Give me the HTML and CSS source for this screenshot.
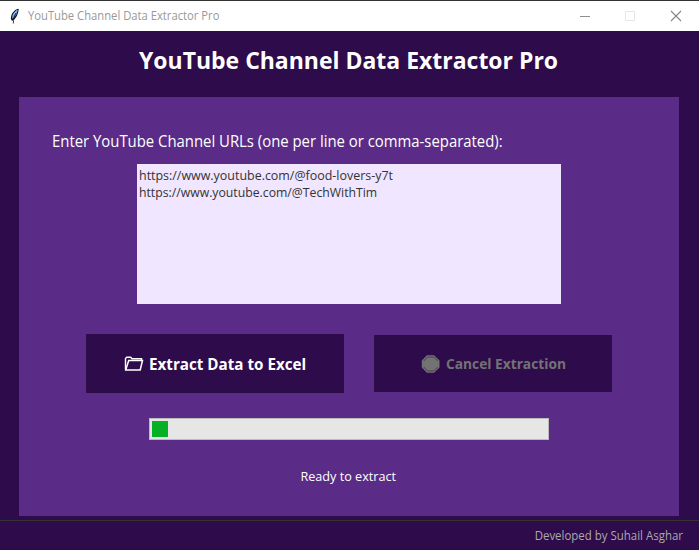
FILE: index.html
```html
<!DOCTYPE html>
<html lang="en">
<head>
<meta charset="utf-8">
<title>YouTube Channel Data Extractor Pro</title>
<link rel="stylesheet" href="styles.css">
</head>
<body>
<div class="window">
  <header class="titlebar">
    <svg class="feather" width="12" height="16" viewBox="0 0 12 16">
      <path d="M9.700.7C6.500 1 3.500 4 2.300 7.500L1.800 10.500l1.200 2.500 2-1.500C7.700 9.500 9.500 5 9.700.7z" fill="#111"/>
      <path d="M8.700 1.800C6.500 2.500 4.200 5 3.200 8l-.2 2.700 1.500-.7C7 8 8.500 5 8.700 1.800z" fill="#5b97e0"/>
      <path d="M7 5C5.500 7.500 4.500 11 4.300 15.500" fill="none" stroke="#111" stroke-width=".8"/>
      <path d="M7.800 2.500 4 7.500" stroke="#b5d6fa" stroke-width=".8"/>
    </svg>
    <span class="caption">YouTube Channel Data Extractor Pro</span>
    <svg class="controls" width="103" height="12" viewBox="0 0 103 12" fill="none">
      <path d="M0 6.500h10" stroke="#8f8f8f"/>
      <path d="M45.500 1.500h9v9h-9z" stroke="#e6e6e6"/>
      <path d="M91 1l10 10M101 1l-10 10" stroke="#858585" stroke-width="1.100"/>
    </svg>
  </header>
  <h1 class="heading">YouTube Channel Data Extractor Pro</h1>
  <main class="panel">
    <div class="label">Enter YouTube Channel URLs (one per line or comma-separated):</div>
    <div class="urls">
      <div class="url-first">https://www.youtube.com/@food-lovers-y7t</div>
      <div class="url-second">https://www.youtube.com/@TechWithTim</div>
    </div>
    <div class="actions">
      <div class="btn btn-extract">
        <svg class="folder" width="20" height="16" viewBox="0 0 20 16" fill="none" stroke="#fff">
          <path d="M1.500 13.500V2.500l1.200-1.200h4l1.300 1.500h9.500v2" stroke-width="1.400"/>
          <path d="M1.700 14 4.700 4.500h13.800l-2.300 9.500z" stroke-width="1.500"/>
        </svg>
        <span>Extract Data to Excel</span>
      </div>
      <div class="btn btn-cancel">
        <svg class="stop" width="20" height="18" viewBox="0 0 20 18">
          <path d="M6 .3h7l5.500 5.200v7L13 17.700H6L.8 12.500v-7z" fill="#737373"/>
          <path d="M2.700 6l4-4h6l4 4M2.700 12l4 4h6l4-4" fill="none" stroke="#49364f" stroke-width=".9"/>
        </svg>
        <span>Cancel Extraction</span>
      </div>
    </div>
    <div class="progress"><div class="chunk"></div></div>
    <div class="status">Ready to extract</div>
  </main>
  <footer class="footer"><div class="credit">Developed by Suhail Asghar</div></footer>
</div>
</body>
</html>
```
FILE: styles.css
```css
* { box-sizing: border-box; }
body { margin: 0; font-family: "Open Sans", "Noto Sans", sans-serif; }
.window { width: 699px; height: 550px; display: flex; flex-direction: column; background: #2e0b4b; overflow: hidden; white-space: nowrap; }
.titlebar { height: 31px; flex: none; display: flex; align-items: center; background: #fff; border-top: 1px solid #333; padding: 0 16px 0 9px; }
.feather { margin-top: -1px; }
.caption { margin-left: 7px; font-size: 12px; line-height: 16px; color: #999; transform: scaleX(.936); transform-origin: left; }
.controls { margin-left: auto; margin-top: -1px; }
.heading { height: 66px; flex: none; margin: 0; padding: 12px 2px 0 0; text-align: center; font-size: 24px; line-height: 34px; font-weight: 700; color: #fff; transform: scaleX(.957); }
.panel { height: 419px; flex: none; margin: 0 20px 0 19px; background: #5a2c87; display: flex; flex-direction: column; align-items: center; }
.label { align-self: flex-start; margin: 33px 0 0 33px; height: 22px; line-height: 22px; font-size: 16px; color: #fff; transform: scaleX(.93); transform-origin: left; }
.urls { width: 424px; height: 140px; margin-top: 12px; padding: 3px 2px; background: #f0e6ff; color: #333; font-size: 13px; line-height: 17px; }
.url-first { transform: scaleX(.957); transform-origin: left; }
.url-second { transform: scaleX(.941); transform-origin: left; }
.actions { display: flex; align-items: center; gap: 30px; margin-top: 30px; }
.btn { display: flex; align-items: center; background: #2e0b4b; color: #fff; font-weight: 700; line-height: 20px; gap: 5px; }
.btn span { transform-origin: left; }
.btn-extract { width: 258px; height: 59px; padding-left: 38px; font-size: 15.500px; }
.btn-extract span { transform: scaleX(.98); }
.btn-cancel { width: 238px; height: 57px; padding-left: 47px; color: #737373; font-size: 15px; }
.btn-cancel span { margin-bottom: 2px; transform: scaleX(.916); }
.progress { width: 400px; height: 22px; margin-top: 25px; border: 1px solid #bcbcbc; background: #e6e6e6; padding: 2px; }
.chunk { width: 16px; height: 16px; background: #06b025; }
.status { margin-top: 27px; padding-right: 2px; font-size: 13px; line-height: 18px; color: #fff; transform: scaleX(.972); }
.footer { margin-top: 4px; height: 30px; border-top: 1px solid #333; padding: 6px 16px 0 0; text-align: right; color: #aaa; font-size: 12px; line-height: 18px; }
.credit { transform: scaleX(.955); transform-origin: right; }
```
